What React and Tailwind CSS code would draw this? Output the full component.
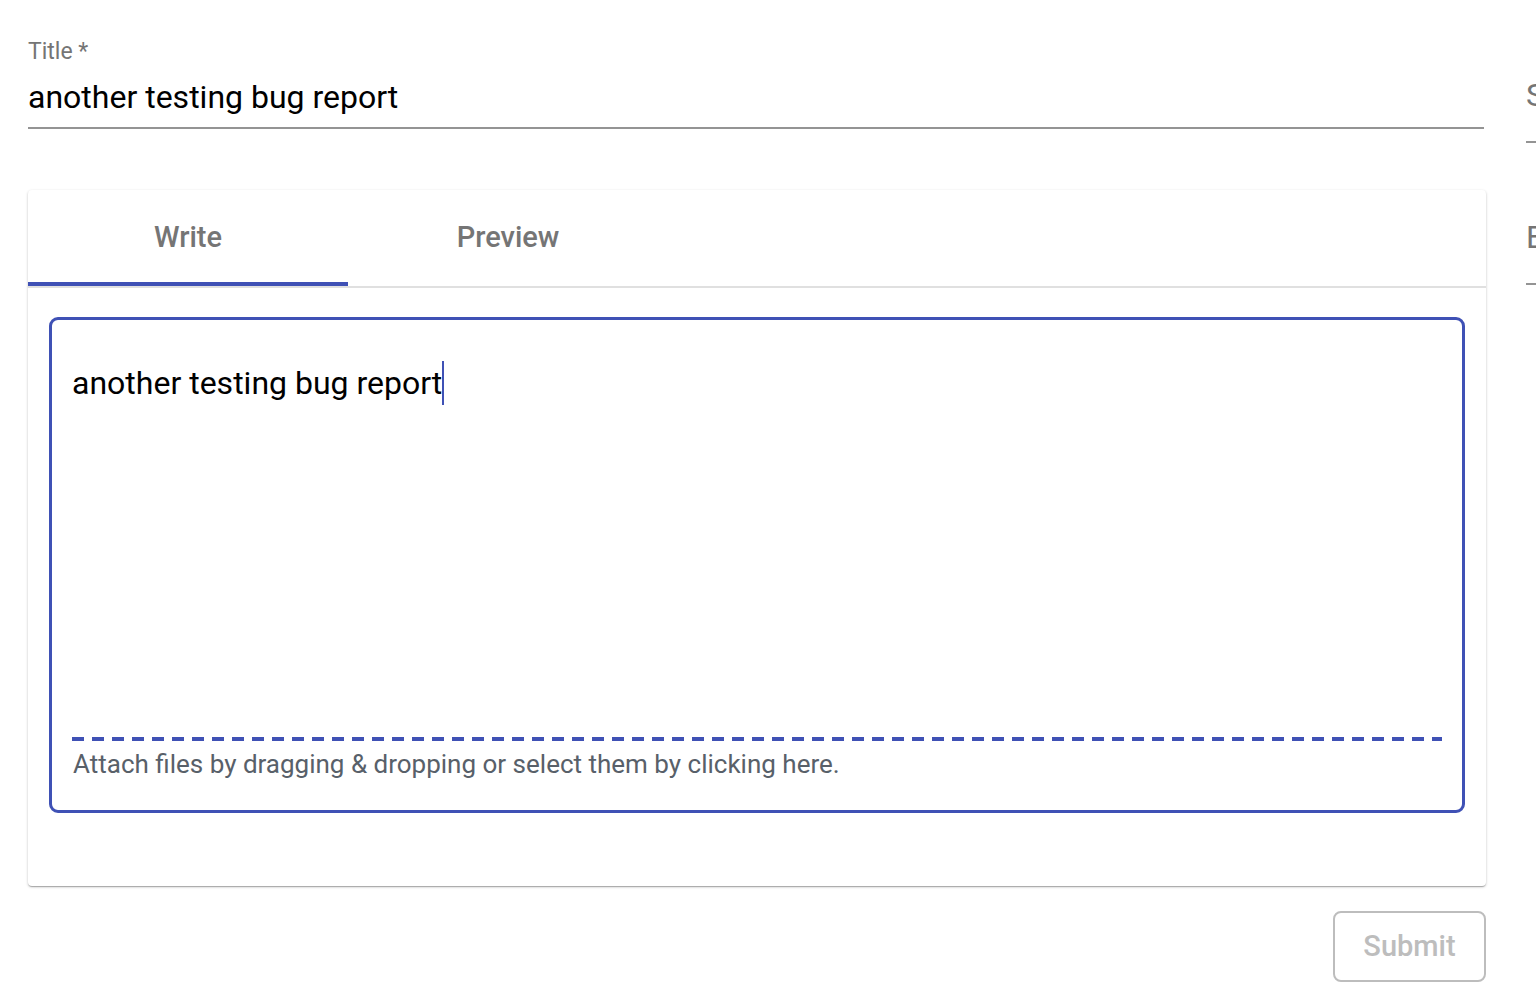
import React from "react";

const font = { fontFamily: "Roboto, 'Liberation Sans', sans-serif" };

const SideField = ({ letter, className }) => (
  <div className={className}>
    <div className="text-[32px] leading-[40px] text-[#757575]">{letter}</div>
    <div className="h-[2px] w-[40px] bg-[#949494] mt-[26px]" />
  </div>
);

export default function App() {
  return (
    <div className="w-[1536px] h-[998px] overflow-hidden bg-white flex pl-[28px] pt-[37px]" style={font}>
      <div className="w-[1458px] shrink-0">
        <div className="w-[1456px]">
          <label className="block text-[23px] leading-[30px] text-[#757575]">Title *</label>
          <div className="text-[32px] leading-[44px] text-black mt-[8px] pb-[8px] border-b-2 border-[#949494]">
            another testing bug report
          </div>
        </div>

        <div className="mt-[61px] bg-white rounded-[4px] shadow-[0_1px_3px_rgba(0,0,0,0.2),0_1px_1px_rgba(0,0,0,0.14),0_2px_1px_-1px_rgba(0,0,0,0.12)]">
          <div className="flex border-b-2 border-[#e0e0e0]">
            <div className="relative w-[320px] h-[96px] flex items-center justify-center text-[29px] font-medium text-[#757575]">
              Write
              <span className="absolute left-0 right-0 bottom-0 h-[4px] bg-[#3f51b5]" />
            </div>
            <div className="w-[320px] h-[96px] flex items-center justify-center text-[29px] font-medium text-[#757575]">
              Preview
            </div>
          </div>
          <div className="pl-[21px] pr-[21px] pt-[29px] pb-[73px]">
            <div className="h-[496px] border-[3px] border-[#3f51b5] rounded-[9px] flex flex-col pl-[20px] pr-[20px]">
              <div className="flex-1 pt-[43px] text-[32px] leading-[40px] text-black">
                another testing bug report
                <span className="inline-block w-[2px] h-[44px] bg-[#3f51b5] align-middle -mt-[6px]" />
              </div>
              <div className="h-[4px] bg-[repeating-linear-gradient(90deg,#3f51b5_0,#3f51b5_12px,transparent_12px,transparent_20px)]" />
              <div className="pt-[8px] pb-[31px] pl-[1px] text-[26px] leading-[30px] text-[#586069]">
                Attach files by dragging &amp; dropping or select them by clicking here.
              </div>
            </div>
          </div>
        </div>

        <div className="flex justify-end mt-[25px]">
          <button className="w-[153px] h-[71px] border-2 border-[#bdbdbd] rounded-[8px] text-[29px] font-medium text-[#bdbdbd]">
            Submit
          </button>
        </div>
      </div>

      <div className="ml-[40px] shrink-0">
        <SideField letter="S" className="mt-[38px]" />
        <SideField letter="E" className="mt-[74px]" />
      </div>
    </div>
  );
}
